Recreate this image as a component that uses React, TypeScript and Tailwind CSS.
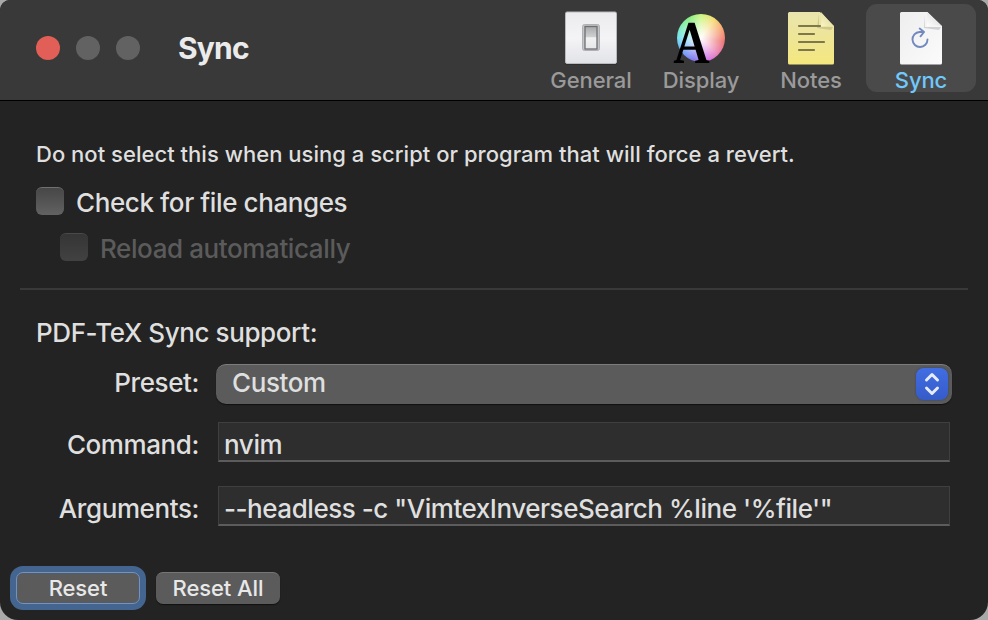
import React from "react";

function GeneralIcon() {
  return (
    <svg className="shrink-0" width="56" height="56" viewBox="0 0 56 56">
      <defs>
        <linearGradient id="plate" x1="0" y1="0" x2="0" y2="1">
          <stop offset="0" stopColor="#ebebee" />
          <stop offset="0.5" stopColor="#f4f4f6" />
          <stop offset="1" stopColor="#e2e3e8" />
        </linearGradient>
        <linearGradient id="rocker" x1="0" y1="0" x2="0" y2="1">
          <stop offset="0" stopColor="#a8a9ab" />
          <stop offset="0.46" stopColor="#cfd0d2" />
          <stop offset="0.5" stopColor="#f2f2f3" />
          <stop offset="1" stopColor="#e6e7e9" />
        </linearGradient>
      </defs>
      <rect x="2" y="2.5" width="52" height="52" rx="1.5" fill="#262626" />
      <rect x="2.500" y="2" width="51" height="51.500" rx="1.500" fill="url(#plate)" stroke="#b9babd" />
      <rect x="19.500" y="14.500" width="17" height="26" rx="2" fill="#c4c5c8" stroke="#b0b1b5" />
      <rect x="22" y="16.500" width="12" height="22.500" fill="url(#rocker)" stroke="#6e6f71" strokeWidth="1.300" />
    </svg>
  );
}

function DisplayIcon() {
  return (
    <div className="relative h-14 w-14 shrink-0">
      <div className="absolute left-[4px] top-[4px] h-12 w-12 rounded-full bg-[radial-gradient(circle,#fff_0%,#ffffffb0_25%,#ffffff30_60%,#ffffff00_72%),conic-gradient(#c8f57a,#f5d96c_35deg,#f59a6c_70deg,#ec6d6c_100deg,#e879b4_135deg,#d56ee6_160deg,#7b72f0_200deg,#6aa0f5_235deg,#6cdff0_270deg,#78eeb0_300deg,#85ec7c_330deg,#c8f57a)]" />
      <svg className="absolute inset-0 overflow-visible" width="56" height="56" viewBox="0 0 56 56">
        <g transform="translate(3.500 52.500) skewX(8)">
          <text x="0" y="0" fontFamily="Liberation Serif, serif" fontStyle="italic" fontWeight="700" fontSize="61" textLength="35" lengthAdjust="spacingAndGlyphs" fill="#000">A</text>
        </g>
      </svg>
    </div>
  );
}

function NotesIcon() {
  return (
    <svg className="shrink-0" width="56" height="56" viewBox="0 0 56 56">
      <defs>
        <linearGradient id="note" x1="0" y1="0" x2="0" y2="1">
          <stop offset="0" stopColor="#e9e4ae" />
          <stop offset="1" stopColor="#f4e77e" />
        </linearGradient>
        <linearGradient id="noteFold" x1="0" y1="1" x2="1" y2="0">
          <stop offset="0" stopColor="#faf5c4" />
          <stop offset="1" stopColor="#d9d392" />
        </linearGradient>
      </defs>
      <path d="M6.500 2H37L51 16V53Q51 54.500 49.500 54.500H6.500Q5 54.500 5 53V3.500Q5 2 6.500 2Z" fill="url(#note)" />
      <path d="M36 4V17H50L48 20L34 18Z" fill="#a9a47270" />
      <path d="M38 2L51 16.500Q45 15 38 16.500Q39 9 38 2Z" fill="url(#noteFold)" />
      <path d="M16 16H37M16 24H31M16 32H41M16 40H31" stroke="#7d784a" strokeWidth="2.200" strokeLinecap="round" />
    </svg>
  );
}

function SyncIcon() {
  return (
    <svg className="shrink-0" width="56" height="56" viewBox="0 0 56 56">
      <defs>
        <linearGradient id="page" x1="0" y1="0" x2="1" y2="1">
          <stop offset="0" stopColor="#eeeeef" />
          <stop offset="1" stopColor="#fbfbfb" />
        </linearGradient>
        <linearGradient id="pageFold" x1="0" y1="1" x2="1" y2="0">
          <stop offset="0" stopColor="#fff" />
          <stop offset="1" stopColor="#d2d2d4" />
        </linearGradient>
      </defs>
      <path d="M8.500 2H34.500L49 16V53Q49 54.500 47.500 54.500H8.500Q7 54.500 7 53V3.500Q7 2 8.500 2Z" fill="url(#page)" />
      <path d="M32 5V17H48L46 20L31 18Z" fill="#a5a5a970" />
      <path d="M34 2L49 16.500Q42 14.500 33.500 16.500Q35 9 34 2Z" fill="url(#pageFold)" />
      <path d="M30.500 22H26.500A7.500 7.500 0 1 0 34.500 29.500" fill="none" stroke="#7189be" strokeWidth="1.900" strokeLinecap="round" />
      <path d="M26.700 18.500L31 22L27.500 26.300" fill="none" stroke="#7189be" strokeWidth="1.900" strokeLinecap="round" strokeLinejoin="round" />
    </svg>
  );
}

type TabProps = { label: string; active?: boolean; children: React.ReactNode };

function Tab({ label, active, children }: TabProps) {
  return (
    <button className={`flex h-[88px] w-[110px] flex-col items-center rounded-[11px] pt-[6px] ${active ? "bg-[#4a4a4a] text-[#70c8fb]" : "text-[#9a9a9a]"}`}>
      {children}
      <span className="whitespace-nowrap text-[22px] leading-[28px] tracking-[-0.1px]">{label}</span>
    </button>
  );
}

type FieldProps = { label: string; offset?: string; children: React.ReactNode };

function Field({ label, offset = "", children }: FieldProps) {
  return (
    <div className="flex h-10 items-center">
      <div className={`w-[200px] shrink-0 pr-px text-right ${offset}`}>{label}</div>
      {children}
    </div>
  );
}

const inputBox =
  "ml-[18px] h-10 w-[732px] whitespace-pre border border-b-2 border-[#3f3f3f] border-b-[#5c5c5c] bg-[#2e2e2e] pl-[5px] pt-[4px] leading-[36px]";

export default function App() {
  return (
    <div className="h-[620px] w-[988px] overflow-hidden bg-[#a9a9a9] font-['Inter','Liberation_Sans',sans-serif] text-[26px] font-[450] leading-[32px] tracking-[-0.4px] text-[#dfdfdf]">
      <div className="flex h-full flex-col overflow-hidden rounded-t-[10px] rounded-b-[18px] bg-[#232323]">
        <header className="flex h-[101px] shrink-0 border-b border-black bg-[#393939] pl-9 pr-3 pt-1">
          <div className="flex h-[88px] items-center gap-4">
            <i className="h-6 w-6 rounded-full bg-[#e15f57]" />
            <i className="h-6 w-6 rounded-full bg-[#626262]" />
            <i className="h-6 w-6 rounded-full bg-[#626262]" />
            <h1 className="ml-[22px] text-[30px] font-bold tracking-[-0.8px] text-[#ebebeb]">Sync</h1>
          </div>
          <nav className="ml-auto flex">
            <Tab label="General"><GeneralIcon /></Tab>
            <Tab label="Display"><DisplayIcon /></Tab>
            <Tab label="Notes"><NotesIcon /></Tab>
            <Tab label="Sync" active><SyncIcon /></Tab>
          </nav>
        </header>

        <section className="pl-9 pt-[39px]">
          <p className="whitespace-nowrap text-[22px] leading-[28px] tracking-[0.025px]">
            Do not select this when using a script or program that will force a revert.
          </p>
          <label className="mt-[19px] flex h-8 items-center gap-3">
            <span className="mb-1 h-7 w-7 rounded-[6px] border-t border-[#707070] bg-linear-to-b from-[#474747] to-[#626262]" />
            <span>Check for file changes</span>
          </label>
          <label className="ml-6 mt-[14px] flex h-8 items-center gap-3 text-[#5b5b5b]">
            <span className="mb-1 h-7 w-7 rounded-[6px] border-t border-[#494949] bg-linear-to-b from-[#353535] to-[#424242]" />
            <span>Reload automatically</span>
          </label>
        </section>

        <hr className="mx-5 mt-[23px] h-[2px] shrink-0 border-0 bg-[#393939]" />

        <section className="pt-[27px]">
          <h2 className="pl-9">PDF-TeX Sync support:</h2>
          <div className="mt-[15px] flex flex-col">
            <Field label="Preset:" offset="pb-[2px]">
              <button className="ml-4 flex h-10 w-[736px] items-center justify-between rounded-[10px] border-t border-[#7c7c7c] bg-[#5b5b5b] pl-4 pr-1 shadow-[0_1px_1px_#111]">
                <span className="pb-[3px]">Custom</span>
                <span className="mb-px flex h-8 w-8 items-center justify-center rounded-[8px] bg-linear-to-b from-[#416ee4] to-[#355bc8] shadow-[0_0_2px_#2a3d78]">
                  <svg width="32" height="32" viewBox="0 0 32 32" fill="none" stroke="#e6ebf8" strokeWidth="3" strokeLinecap="round" strokeLinejoin="round">
                    <path d="M10.500 12L16 6.500L21.500 12M10.500 20L16 25.500L21.500 20" />
                  </svg>
                </span>
              </button>
            </Field>
            <div className="h-[18px]" />
            <Field label="Command:" offset="pt-[6px]">
              <div className={inputBox}>nvim</div>
            </Field>
            <div className="h-6" />
            <Field label="Arguments:" offset="pt-[6px]">
              <div className={inputBox}><span className="tracking-[-0.46px]">{`--headless -c "VimtexInverseSearch %line '%file'"`}</span></div>
            </Field>
          </div>
        </section>

        <footer className="flex gap-4 pl-4 pt-[46px] text-[22px] tracking-[-0.1px] text-[#e8e8e8]">
          <button className="h-8 w-[124px] rounded-[7px] border border-[#6d93c8] bg-[#5b5b5b] leading-[30px] shadow-[0_0_0_6px_#43658f]">
            Reset
          </button>
          <button className="h-8 w-[124px] rounded-[7px] border-t border-[#767676] bg-[#5b5b5b] pb-px leading-[30px] shadow-[0_1px_1px_#111]">
            Reset All
          </button>
        </footer>
      </div>
    </div>
  );
}
